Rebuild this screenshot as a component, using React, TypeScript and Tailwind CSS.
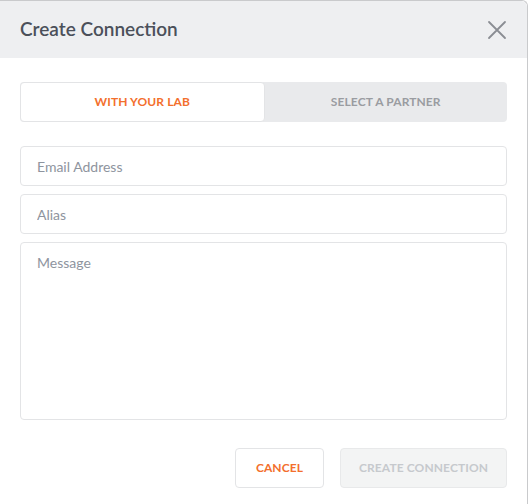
import React, { useState } from 'react';

export default function App() {
    const [tab, setTab] = useState<'lab' | 'partner'>('lab');

    return (
        <div className="w-[529px] h-[504px] bg-white overflow-hidden" style={{ fontFamily: 'Lato, "Noto Sans", sans-serif' }}>
            <div className="w-[528px] h-[504px] bg-white border-t border-r border-[#c9cacc] rounded-tr-[6px] flex flex-col">
                {/* Header */}
                <div className="h-[57px] bg-[#eeeff1] flex items-center justify-between pl-5 pr-5 rounded-tr-[6px]">
                    <h2 className="text-[19px] font-semibold text-[#4b505a]">Create Connection</h2>
                    <button className="text-[#8a8d93]">
                        <svg width="20" height="20" viewBox="0 0 20 20" fill="none" stroke="currentColor" strokeWidth="1.8" strokeLinecap="round">
                            <path d="M2 2L18 18M18 2L2 18" />
                        </svg>
                    </button>
                </div>

                <div className="flex flex-col px-5 pt-6">
                    {/* Tabs */}
                    <div className="flex h-[40px] bg-[#e9eaec] rounded-[4px]">
                        <button
                            onClick={() => setTab('lab')}
                            className={`flex-1 rounded-[4px] text-[12px] font-bold tracking-[0.1px] ${tab === 'lab' ? 'bg-white border border-[#e3e4e6] text-[#f36f2d]' : 'text-[#9a9ca1]'}`}
                        >
                            WITH YOUR LAB
                        </button>
                        <button
                            onClick={() => setTab('partner')}
                            className={`flex-1 rounded-[4px] text-[12px] font-bold tracking-[0.1px] ${tab === 'partner' ? 'bg-white border border-[#e3e4e6] text-[#f36f2d]' : 'text-[#9a9ca1]'}`}
                        >
                            SELECT A PARTNER
                        </button>
                    </div>

                    {/* Fields */}
                    <div className="flex flex-col gap-2 mt-[24px]">
                        <input
                            placeholder="Email Address"
                            className="h-[40px] w-full px-4 border border-[#e3e4e6] rounded-[4px] text-[14px] text-[#4b505a] placeholder:text-[#8e949e] outline-none"
                        />
                        <input
                            placeholder="Alias"
                            className="h-[40px] w-full px-4 border border-[#e3e4e6] rounded-[4px] text-[14px] text-[#4b505a] placeholder:text-[#8e949e] outline-none"
                        />
                        <textarea
                            placeholder="Message"
                            className="h-[178px] w-full px-4 py-[9px] border border-[#e3e4e6] rounded-[4px] text-[14px] text-[#4b505a] placeholder:text-[#8e949e] outline-none resize-none"
                        />
                    </div>

                    {/* Actions */}
                    <div className="flex justify-end gap-4 mt-[28px]">
                        <button className="h-[40px] w-[89px] border border-[#e3e4e6] rounded-[4px] text-[12px] font-bold text-[#f36f2d] tracking-[0.1px]">
                            CANCEL
                        </button>
                        <button disabled className="h-[40px] w-[167px] bg-[#f3f4f4] border border-[#e8e9ea] rounded-[4px] text-[12px] font-bold text-[#c6c9cd] tracking-[0.1px]">
                            CREATE CONNECTION
                        </button>
                    </div>
                </div>
            </div>
        </div>
    );
}
